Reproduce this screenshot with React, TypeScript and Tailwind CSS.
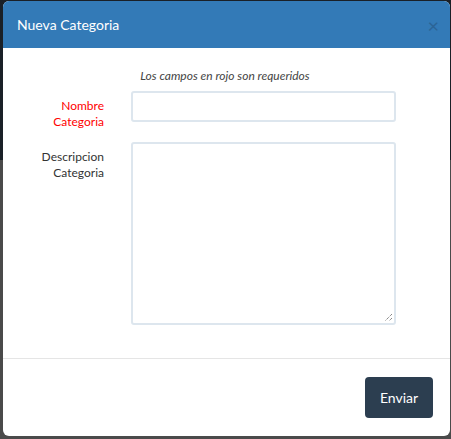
export default function App() {
  return (
    <div className="w-[451px] h-[439px] overflow-hidden pl-[3px] pt-px bg-[linear-gradient(to_bottom,#1a2027_0px,#1a2027_160px,#4a4a4a_160px)] font-['Lato',sans-serif]">
      <div className="w-[447px] h-[435px] bg-white rounded-md overflow-hidden flex flex-col">
        {/* Header */}
        <div className="h-[47px] shrink-0 bg-[#337ab7] flex items-center justify-between pl-[14px] pr-[11px]">
          <h4 className="text-[14px] text-white">Nueva Categoria</h4>
          <span className="text-[20px] leading-none text-[#2a5f8f] opacity-80">×</span>
        </div>

        {/* Body */}
        <div className="h-[311px] shrink-0 pt-[20px] border-b border-[#e5e5e5]">
          <p className="text-[12px] leading-[16px] italic text-[#444] text-center pr-[3px]">
            Los campos en rojo son requeridos
          </p>
          <div className="mt-[7px] flex flex-col gap-[20px]">
            <div className="flex h-[31px]">
              <label className="w-[101px] text-right text-[12px] leading-[16px] text-[#ff0000] pt-[7px]">
                Nombre<br />Categoria
              </label>
              <div className="w-[265px] h-[31px] ml-[27px] border-2 border-[#dde6ee] rounded-[3px]" />
            </div>
            <div className="flex">
              <label className="w-[101px] text-right text-[12px] leading-[16px] text-[#333] pt-[7px]">
                Descripcion<br />Categoria
              </label>
              <div className="relative w-[265px] h-[183px] ml-[27px] border-2 border-[#dde6ee] rounded-[3px]">
                <svg className="absolute right-[1px] bottom-[1px]" width="9" height="9" viewBox="0 0 9 9">
                  <path d="M8 1 L1 8 M8 5 L5 8" stroke="#555" strokeWidth="1" strokeDasharray="1 1" />
                </svg>
              </div>
            </div>
          </div>
        </div>

        {/* Footer */}
        <div className="flex justify-end pt-[18px] pr-[17px]">
          <button className="w-[68px] h-[41px] bg-[#2c3e50] text-white text-[14px] rounded-[4px]">
            Enviar
          </button>
        </div>
      </div>
    </div>
  );
}
